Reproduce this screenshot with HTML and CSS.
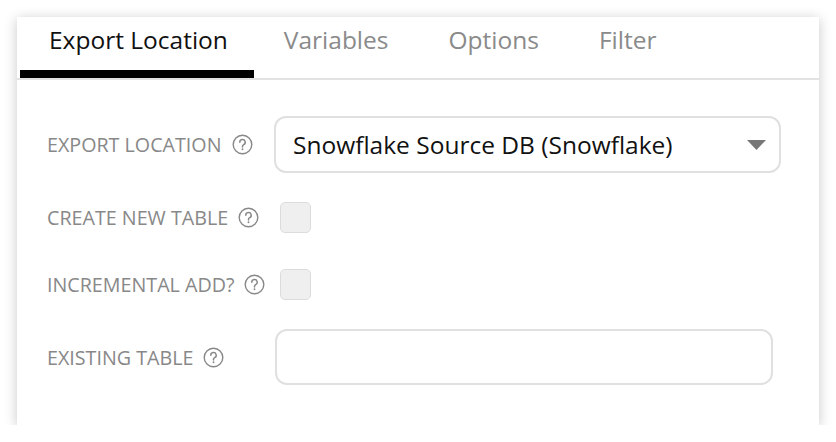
FILE: index.html
```html
<!DOCTYPE html>
<html lang="en">

<head>
    <meta charset="UTF-8">
    <title>Export</title>
    <link rel="stylesheet" href="styles.css">
</head>

<body>
    <div class="card">
        <div class="tabs">
            <div class="tab active">Export Location</div>
            <div class="tab">Variables</div>
            <div class="tab">Options</div>
            <div class="tab">Filter</div>
        </div>
        <div class="form">
            <div class="row row-select">
                <div class="label">
                    <span>EXPORT LOCATION</span>
                    <svg class="help" width="21" height="21" viewBox="0 0 21 21"><circle cx="10.5" cy="10.5" r="9.3" fill="none" stroke="#888" stroke-width="1.4"/><path d="M7.8 8.2a2.7 2.7 0 1 1 3.9 2.4c-.8.4-1.2.9-1.2 1.7v.6" fill="none" stroke="#888" stroke-width="1.5" stroke-linecap="round"/><circle cx="10.5" cy="15.3" r="0.95" fill="#888"/></svg>
                </div>
                <div class="select">
                    <span>Snowflake Source DB (Snowflake)</span>
                    <svg width="19" height="10" viewBox="0 0 19 10"><path d="M0 0h19L9.5 10z" fill="#777"/></svg>
                </div>
            </div>
            <div class="row row-check">
                <div class="label">
                    <span>CREATE NEW TABLE</span>
                    <svg class="help" width="21" height="21" viewBox="0 0 21 21"><circle cx="10.5" cy="10.5" r="9.3" fill="none" stroke="#888" stroke-width="1.4"/><path d="M7.8 8.2a2.7 2.7 0 1 1 3.9 2.4c-.8.4-1.2.9-1.2 1.7v.6" fill="none" stroke="#888" stroke-width="1.5" stroke-linecap="round"/><circle cx="10.5" cy="15.3" r="0.95" fill="#888"/></svg>
                </div>
                <div class="checkbox"></div>
            </div>
            <div class="row row-check">
                <div class="label">
                    <span>INCREMENTAL ADD?</span>
                    <svg class="help" width="21" height="21" viewBox="0 0 21 21"><circle cx="10.5" cy="10.5" r="9.3" fill="none" stroke="#888" stroke-width="1.4"/><path d="M7.8 8.2a2.7 2.7 0 1 1 3.9 2.4c-.8.4-1.2.9-1.2 1.7v.6" fill="none" stroke="#888" stroke-width="1.5" stroke-linecap="round"/><circle cx="10.5" cy="15.3" r="0.95" fill="#888"/></svg>
                </div>
                <div class="checkbox"></div>
            </div>
            <div class="row row-input">
                <div class="label">
                    <span>EXISTING TABLE</span>
                    <svg class="help" width="21" height="21" viewBox="0 0 21 21"><circle cx="10.5" cy="10.5" r="9.3" fill="none" stroke="#888" stroke-width="1.4"/><path d="M7.8 8.2a2.7 2.7 0 1 1 3.9 2.4c-.8.4-1.2.9-1.2 1.7v.6" fill="none" stroke="#888" stroke-width="1.5" stroke-linecap="round"/><circle cx="10.5" cy="15.3" r="0.95" fill="#888"/></svg>
                </div>
                <input class="text-input" type="text">
            </div>
        </div>
    </div>
</body>

</html>
```

FILE: styles.css
```css
body {
    margin: 0;
    background: #fff;
    font-family: "Open Sans", "Noto Sans", sans-serif;
}

.card {
    margin: 17px 0 0 17px;
    width: 802px;
    height: 408px;
    background: #fff;
    box-shadow: 0 2px 12px rgba(0, 0, 0, 0.22);
}

.tabs {
    display: flex;
    padding-left: 3px;
    border-bottom: 2px solid #e2e2e2;
    height: 61px;
}

.tab {
    padding: 6px 30px 0;
    height: 47px;
    line-height: 33px;
    font-size: 24.5px;
    color: #8a8a8a;
    border-bottom: 8px solid transparent;
    margin-bottom: -2px;
}

.tab.active {
    color: #111;
    border-bottom-color: #000;
    padding-left: 29px;
    padding-right: 26px;
}

.form {
    padding: 36px 0 0 30px;
    display: flex;
    flex-direction: column;
    gap: 22px;
}

.row {
    display: flex;
    align-items: center;
}

.row-check {
    height: 45px;
}

.label {
    flex: 0 0 227px;
    display: flex;
    align-items: center;
    gap: 10px;
    font-size: 19.7px;
    color: #888;
}

.help {
    flex: none;
}

.select {
    box-sizing: border-box;
    width: 507px;
    height: 57px;
    border: 2px solid #e0e0e0;
    border-radius: 12px;
    padding: 0 13px 0 17px;
    display: flex;
    align-items: center;
    justify-content: space-between;
    font-size: 24.5px;
    color: #111;
}

.checkbox {
    box-sizing: border-box;
    width: 31px;
    height: 31px;
    margin-left: 6px;
    background: #efefef;
    border: 1px solid #dcdcdc;
    border-radius: 5px;
}

.text-input {
    box-sizing: border-box;
    width: 498px;
    height: 56px;
    margin: 0 0 0 1px;
    border: 2px solid #e0e0e0;
    border-radius: 12px;
    background: #fff;
    outline: none;
}
```
